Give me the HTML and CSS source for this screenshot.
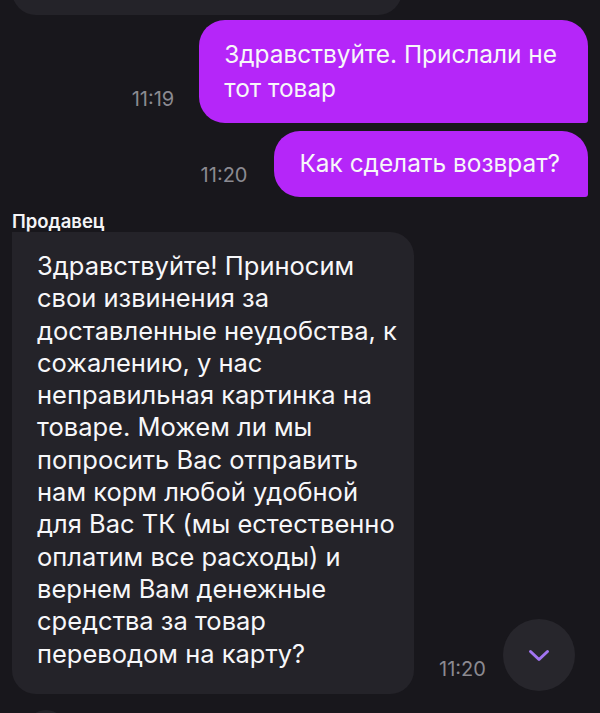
FILE: index.html
```html
<!DOCTYPE html>
<html lang="ru">
<head>
<meta charset="utf-8">
<link rel="stylesheet" href="styles.css">
</head>
<body>
<div class="chat">
  <div class="bubble in prev"></div>

  <div class="row out first">
    <span class="time t1">11:19</span>
    <div class="bubble out b1">Здравствуйте. Прислали не<br>тот товар</div>
  </div>

  <div class="row out second">
    <span class="time t2">11:20</span>
    <div class="bubble out b2">Как сделать возврат?</div>
  </div>

  <div class="sender">Продавец</div>

  <div class="row in">
    <div class="bubble in seller">Здравствуйте! Приносим<br>свои извинения за<br>доставленные неудобства, к<br>сожалению, у нас<br>неправильная картинка на<br>товаре. Можем ли мы<br>попросить Вас отправить<br>нам корм любой удобной<br>для Вас ТК (мы естественно<br>оплатим все расходы) и<br>вернем Вам денежные<br>средства за товар<br>переводом на карту?</div>
    <span class="time t3">11:20</span>
  </div>

  <div class="next"></div>
</div>

<button class="scroll-down" aria-label="Вниз">
  <svg width="22" height="14" viewBox="0 0 22 14"><path d="M2.5 2.5 L11 10.5 L19.5 2.5" fill="none" stroke="#a274f2" stroke-width="3" stroke-linecap="round" stroke-linejoin="round"/></svg>
</button>
</body>
</html>
```

FILE: styles.css
```css
html, body {
  margin: 0;
  padding: 0;
  background: #18171c;
  height: 100%;
  overflow: hidden;
}

body {
  font-family: Inter, "Noto Sans", sans-serif;
  color: #f7f7f9;
  position: relative;
}

.chat {
  display: flex;
  flex-direction: column;
  padding: 0 12px;
}

.bubble {
  font-size: 24.4px;
  line-height: 34px;
}

.bubble.in {
  background: #242329;
}

.prev {
  width: 390px;
  height: 60px;
  margin-top: -45px;
  border-radius: 0 24px 24px 24px;
}

.row {
  display: flex;
  align-items: flex-end;
}

.row.out {
  justify-content: flex-end;
  gap: 25px;
}

.row.first {
  margin-top: 5px;
}

.row.second {
  margin-top: 8px;
  gap: 27px;
}

.bubble.out {
  background: #b526f9;
  border-radius: 26px 26px 3px 26px;
  white-space: nowrap;
}

.b1 {
  padding: 17px 31px 18px 25px;
}

.b2 {
  padding: 15px 28px 17px 25px;
}

.time {
  font-size: 20px;
  line-height: 22px;
  color: #8b8a91;
  white-space: nowrap;
}

.t1 {
  margin-bottom: 13px;
}

.t2 {
  margin-bottom: 11px;
}

.sender {
  margin-top: 13px;
  font-size: 18.5px;
  line-height: 22px;
  font-weight: 600;
  color: #f4f4f6;
}

.row.in {
  gap: 25px;
}

.seller {
  width: 402px;
  box-sizing: border-box;
  padding: 18px 12px 24px 25px;
  border-radius: 0 24px 24px 24px;
  font-size: 25.5px;
  line-height: 32.3px;
  white-space: nowrap;
}

.t3 {
  margin-bottom: 14px;
}

.next {
  margin-top: 16px;
  margin-left: 14px;
  width: 40px;
  height: 40px;
  border-radius: 20px;
  background: #242329;
}

.scroll-down {
  position: absolute;
  left: 503px;
  top: 619px;
  width: 72px;
  height: 72px;
  border-radius: 50%;
  border: none;
  background: #27262c;
  display: flex;
  align-items: center;
  justify-content: center;
  padding: 0;
}

.scroll-down svg {
  display: block;
  margin-top: 1px;
}
```
